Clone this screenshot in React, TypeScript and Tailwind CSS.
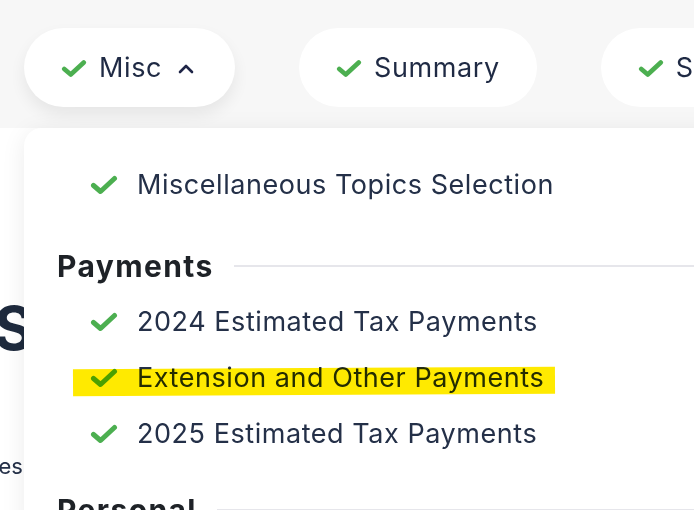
import { ChevronUp } from "lucide-react";

const font = "font-['Inter','Noto_Sans',sans-serif]";

const Check = ({ className = "" }: { className?: string }) => (
  <svg viewBox="0 0 28 20" className={className} fill="none">
    <polyline
      points="3.5,10.5 10.5,16.5 24.5,3.5"
      stroke="#4caf50"
      strokeWidth="5"
      strokeLinecap="round"
      strokeLinejoin="round"
    />
  </svg>
);

const Pill = ({ label, open }: { label: string; open?: boolean }) => (
  <button
    className={`h-[79px] shrink-0 rounded-full bg-white pl-[37px] pr-[37px] pt-[2px] flex items-center gap-[12px] ${
      open ? "shadow-[0_8px_16px_rgba(0,0,0,0.07)]" : ""
    }`}
  >
    <Check className="w-[26px] h-[19px]" />
    <span className="text-[27px] text-[#1f2a44] tracking-[0.6px]">{label}</span>
    {open && <ChevronUp className="w-[24px] h-[24px] text-[#1f2547]" strokeWidth={2.6} />}
  </button>
);

const Item = ({ label, marked }: { label: string; marked?: boolean }) => (
  <div className="relative h-[56px] pl-[66px] flex items-center gap-[19px]">
    <Check className="w-[28px] h-[20px]" />
    <span className="text-[27px] text-[#243048] tracking-[0.55px]">{label}</span>
    {marked && (
      <span className="absolute left-[49px] top-[18px] w-[482px] h-[27px] bg-[#ffea00] mix-blend-multiply -rotate-[0.3deg]" />
    )}
  </div>
);

const Heading = ({ title, className = "" }: { title: string; className?: string }) => (
  <div className={`flex items-center gap-[20px] pl-[33px] h-[40px] ${className}`}>
    <h3 className="text-[30px] font-bold text-[#1e2227] tracking-[1.4px] shrink-0">{title}</h3>
    <div className="flex-1 h-[2px] bg-[#e6e6eb]" />
  </div>
);

export default function App() {
  return (
    <div className={`relative w-[694px] h-[510px] overflow-hidden bg-white ${font}`}>
      <div className="h-[128px] bg-[#f7f7f7] flex items-start pt-[28px] pl-[24px] gap-[64px]">
        <Pill label="Misc" open />
        <Pill label="Summary" />
        <Pill label="State" />
      </div>

      <div className="-ml-[6px] pt-[170px]">
        <h1 className="text-[60px] font-bold text-[#1e2a3d] leading-none">Summary of your return</h1>
        <p className="mt-[92px] -ml-[32px] text-[22px] text-[#243048]">Taxes paid and extensions</p>
      </div>

      <div className="absolute left-[24px] top-[128px] w-[700px] h-[400px] bg-white rounded-tl-[18px] shadow-[0_4px_24px_rgba(0,0,0,0.08)] pt-[29px]">
        <Item label="Miscellaneous Topics Selection" />
        <Heading title="Payments" className="mt-[33px]" />
        <div className="mt-[8px]">
          <Item label="2024 Estimated Tax Payments" />
          <Item label="Extension and Other Payments" marked />
          <Item label="2025 Estimated Tax Payments" />
        </div>
        <Heading title="Personal" className="mt-[28px]" />
      </div>
    </div>
  );
}
